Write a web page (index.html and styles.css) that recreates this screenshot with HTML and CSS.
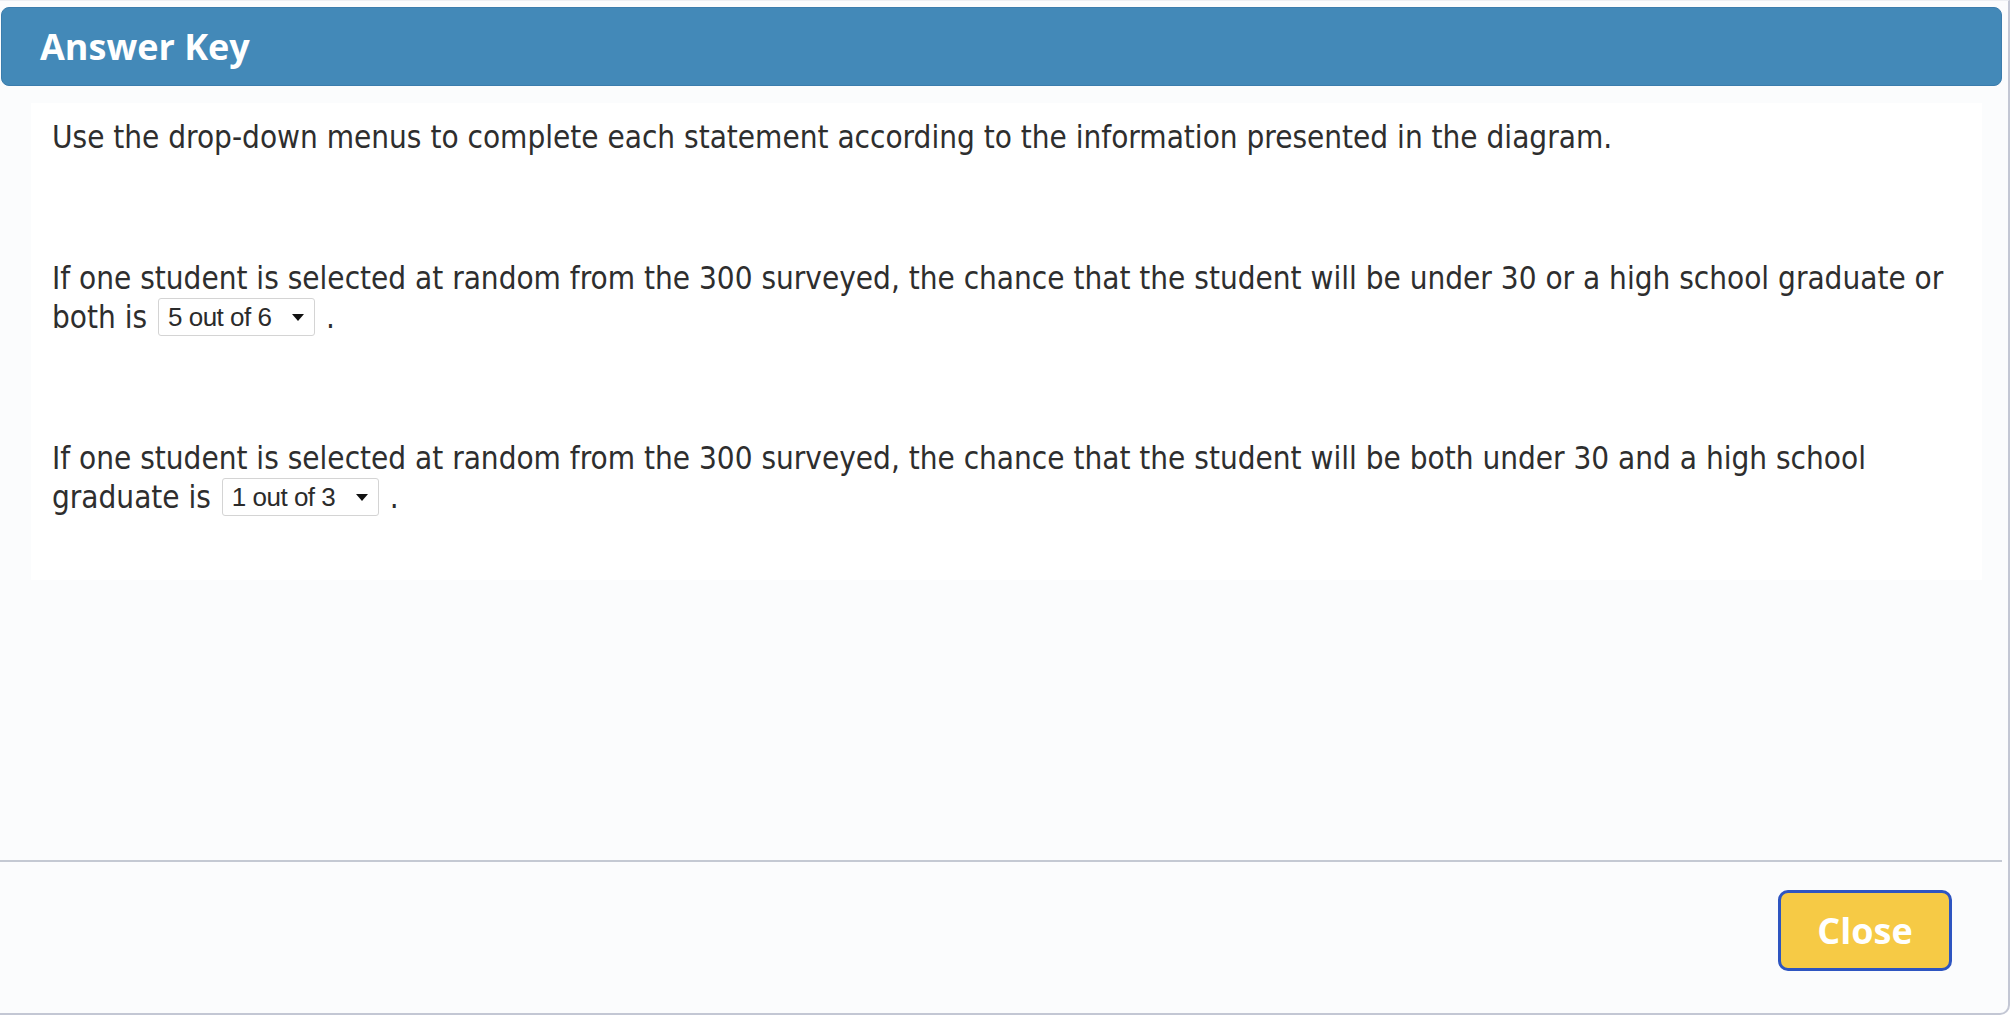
FILE: index.html
```html
<!DOCTYPE html>
<html lang="en">
<head>
<meta charset="utf-8">
<link rel="stylesheet" href="styles.css">
</head>
<body>
<div class="dialog">
    <div class="dialog-header">Answer Key</div>
    <div class="dialog-main">
        <div class="panel">
            <p class="prompt">Use the drop-down menus to complete each statement according to the information presented in the diagram.</p>
            <p class="prompt"><span>If one student is selected at random from the 300 surveyed, the chance that the student will be under 30 or a high school graduate or both is</span> <span class="dropdown"><span class="dropdown-value">5 out of 6</span><span class="caret"></span></span> <span>.</span></p>
            <p class="prompt"><span>If one student is selected at random from the 300 surveyed, the chance that the student will be both under 30 and a high school graduate is</span> <span class="dropdown"><span class="dropdown-value">1 out of 3</span><span class="caret"></span></span> <span>.</span></p>
        </div>
    </div>
    <div class="dialog-footer">
        <button class="close-button">Close</button>
    </div>
</div>
</body>
</html>
```

FILE: styles.css
```css
body {
  margin: 0;
  background-color: #fff;
}

.dialog {
  display: flex;
  flex-direction: column;
  box-sizing: border-box;
  width: 2010px;
  height: 1015px;
  background-color: #fbfcfd;
  border-top: 1px solid #eceef2;
  border-right: 2px solid #c3c7d4;
  border-bottom: 2px solid #c3c7d4;
  border-bottom-right-radius: 10px;
}

.dialog-header {
  height: 79px;
  margin: 6px 6px 0 1px;
  padding-left: 38px;
  box-sizing: border-box;
  background-color: #4389b8;
  border: 1px solid #3b7dad;
  border-radius: 8px;
  color: #fff;
  font-family: "Open Sans", sans-serif;
  font-weight: bold;
  font-size: 36px;
  line-height: 77px;
}

.dialog-main {
  flex: 1;
  padding: 17px 26px 0 31px;
}

.panel {
  height: 477px;
  box-sizing: border-box;
  padding: 15px 20px 0 21px;
  background-color: #fff;
}

.prompt {
  margin: 0 0 102px 0;
  color: #2e2e2e;
  font-family: "DejaVu Sans Condensed", "DejaVu Sans", sans-serif;
  font-stretch: condensed;
  font-size: 31.2px;
  line-height: 39px;
}

.dropdown {
  display: inline-flex;
  align-items: center;
  justify-content: space-between;
  box-sizing: border-box;
  width: 157px;
  height: 38px;
  margin: 0 2px;
  padding: 0 10px 0 9px;
  vertical-align: top;
  background-color: #fff;
  border: 1px solid #d4d4d4;
  border-radius: 3px;
  color: #2b2b2b;
  font-family: "Liberation Sans", sans-serif;
  font-size: 26px;
  letter-spacing: -0.5px;
}

.caret {
  width: 0;
  height: 0;
  border-left: 6px solid transparent;
  border-right: 6px solid transparent;
  border-top: 7px solid #111;
}

.dialog-footer {
  height: 153px;
  box-sizing: border-box;
  margin-right: 6px;
  padding: 28px 50px 0 0;
  display: flex;
  justify-content: flex-end;
  align-items: flex-start;
  border-top: 2px solid #c4c9d3;
}

.close-button {
  width: 174px;
  height: 81px;
  background-color: #f6ca45;
  border: 3px solid #2e55c1;
  border-radius: 10px;
  color: #fff;
  font-family: "Open Sans", sans-serif;
  font-weight: bold;
  font-size: 36px;
  cursor: pointer;
}
```
